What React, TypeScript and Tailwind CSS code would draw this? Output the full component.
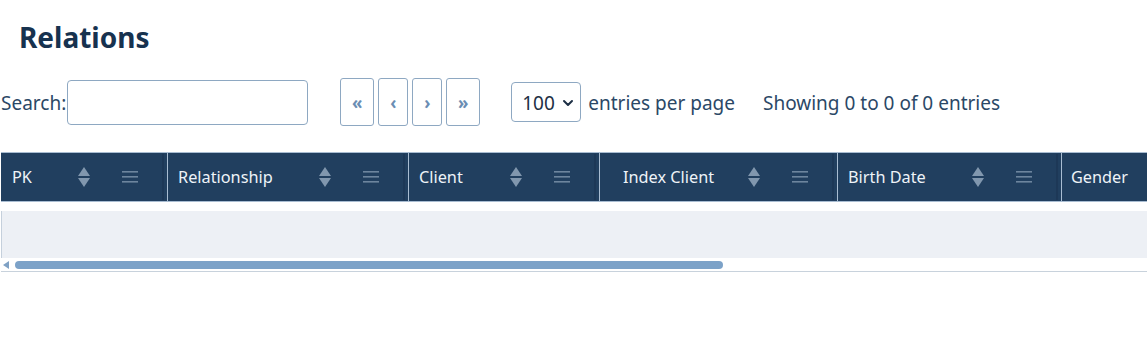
import { ChevronDown } from 'lucide-react'

const COLUMNS = [
  { label: 'PK', width: 'w-[167px]', pad: 'pl-[11px]', icons: true },
  { label: 'Relationship', width: 'w-[241px]', pad: 'pl-[10px]', icons: true },
  { label: 'Client', width: 'w-[191px]', pad: 'pl-[10px]', icons: true },
  { label: 'Index Client', width: 'w-[238px]', pad: 'pl-[23px]', icons: true },
  { label: 'Birth Date', width: 'w-[224px]', pad: 'pl-[10px]', icons: true },
  { label: 'Gender', width: 'w-[200px]', pad: 'pl-[9px]', icons: false },
]

function SortIcon() {
  return (
    <svg width="12" height="20" viewBox="0 0 12 20" className="flex-shrink-0">
      <path d="M6 0 L12 9 L0 9 Z" fill="#8197ae" />
      <path d="M0 11 L12 11 L6 20 Z" fill="#8197ae" />
    </svg>
  )
}

function MenuIcon() {
  return (
    <svg width="16" height="12" viewBox="0 0 16 12" className="flex-shrink-0">
      <rect x="0" y="0" width="16" height="1.6" fill="#6d859e" />
      <rect x="0" y="5" width="16" height="1.6" fill="#6d859e" />
      <rect x="0" y="10" width="16" height="1.6" fill="#6d859e" />
    </svg>
  )
}

function PageButton({ label, width }: { label: string; width: string }) {
  return (
    <div
      className={`flex h-[48px] ${width} items-center justify-center rounded-[3px] border border-[#8ea8c2] pt-[2px] text-[17px] font-bold text-[#6a8db3]`}
    >
      {label}
    </div>
  )
}

export default function App() {
  return (
    <div className="h-[342px] w-[1147px] overflow-hidden bg-white font-['Segoe_UI','Noto_Sans',sans-serif] text-[#2b4866]">
      <h1 className="pl-[19px] pt-[16px] text-[28px] leading-[42px] font-bold text-[#17324f]">Relations</h1>

      <div className="mt-[20px] flex h-[48px] items-center pl-[1px] text-[19px]">
        <span className="pt-[3px]">Search:</span>
        <div className="ml-[1px] h-[45px] w-[241px] rounded-[4px] border border-[#8ea8c2]" />

        <div className="ml-[32px] flex gap-[4px]">
          <PageButton label="«" width="w-[34px]" />
          <PageButton label="‹" width="w-[30px]" />
          <PageButton label="›" width="w-[30px]" />
          <PageButton label="»" width="w-[34px]" />
        </div>

        <div className="ml-[31px] flex h-[40px] w-[70px] items-center justify-between rounded-[4px] border border-[#8ea8c2] pl-[10px] pr-[4px] pt-[2px] text-[#1d2f45]">
          <span>100</span>
          <ChevronDown className="h-4 w-4" strokeWidth={3} />
        </div>
        <span className="ml-[7px] pt-[3px]">entries per page</span>
        <span className="ml-[28px] pt-[3px]">Showing 0 to 0 of 0 entries</span>
      </div>

      <div className="mt-[26px] w-[1147px] overflow-hidden pl-[1px]">
        <div className="flex h-[50px] w-max border-y border-[#a9bdd2] bg-[#213f5f]">
          {COLUMNS.map((col) => (
            <div
              key={col.label}
              className={`flex h-full ${col.width} flex-shrink-0 items-center border-r border-[#a9bdd2] ${col.pad}`}
            >
              <span className="flex-1 pt-[1px] text-[16.3px] text-[#eef3f8]">{col.label}</span>
              {col.icons && (
                <div className="flex items-center">
                  <SortIcon />
                  <div className="ml-[32px]">
                    <MenuIcon />
                  </div>
                  <div className="ml-[24px] h-[46px] w-[2px] bg-[#1d3857]" />
                  <div className="w-[3px]" />
                </div>
              )}
            </div>
          ))}
        </div>

        <div className="mt-[9px] h-[47px] w-full border-l border-[#c5d0dc] bg-[#edf0f5]" />

        <div className="mt-[2px] flex h-[10px] items-center pl-[2px]">
          <svg width="6" height="8" viewBox="0 0 6 8">
            <path d="M6 0 L6 8 L0 4 Z" fill="#7fa1c4" />
          </svg>
          <div className="ml-[6px] h-[8px] w-[708px] rounded-full bg-[#7ca2c8]" />
        </div>
        <div className="mt-[1px] h-[1px] w-full bg-[#c8d2dc]" />
      </div>
    </div>
  )
}
